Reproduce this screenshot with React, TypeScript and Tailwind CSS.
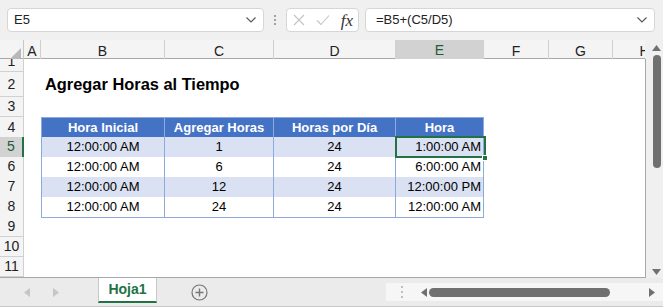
import React from "react";

const cols = ["A", "B", "C", "D", "E", "F", "G", "H"];
const rowHeights: Record<number, string> = { 1: "h-[13px]", 2: "h-[25px]" };

const data = [
  ["12:00:00 AM", "1", "24", "1:00:00 AM"],
  ["12:00:00 AM", "6", "24", "6:00:00 AM"],
  ["12:00:00 AM", "12", "24", "12:00:00 PM"],
  ["12:00:00 AM", "24", "24", "12:00:00 AM"],
];

const gridCols = "grid grid-cols-[24px_17px_124px_109px_122px_88px_65px_64px_64px]";

function Chevron() {
  return (
    <svg width="12" height="8" viewBox="0 0 12 8" fill="none">
      <path d="M1.5 1.5L6 6l4.5-4.5" stroke="#555" strokeWidth="1.1" />
    </svg>
  );
}

function FormulaBar() {
  return (
    <div className="h-[40px] flex items-center bg-[#f0f0f0] pl-[7px] pr-[8px]">
      <div className="w-[257px] h-[24px] bg-white border border-[#d6d6d6] rounded-[4px] flex items-center justify-between pl-[6px] pr-[6px] text-[13px] text-[#222]">
        <span>E5</span>
        <Chevron />
      </div>
      <div className="w-[22px] flex flex-col items-center gap-[2px]">
        <span className="w-[2px] h-[2px] bg-[#a0a0a0]" />
        <span className="w-[2px] h-[2px] bg-[#a0a0a0]" />
        <span className="w-[2px] h-[2px] bg-[#a0a0a0]" />
      </div>
      <div className="w-[73px] h-[24px] bg-white border border-[#d6d6d6] rounded-[4px] flex items-center justify-between pl-[6px] pr-[5px]">
        <svg width="12" height="12" viewBox="0 0 12 12">
          <path d="M1 1l10 10M11 1L1 11" stroke="#c4c4c4" strokeWidth="1.1" />
        </svg>
        <svg width="14" height="12" viewBox="0 0 14 12">
          <path d="M1 6.5l4 4L13 1.5" stroke="#c4c4c4" strokeWidth="1.1" fill="none" />
        </svg>
        <span className="text-[17px] italic text-[#333] font-['Liberation_Serif',serif] leading-none">fx</span>
      </div>
      <div className="ml-[6px] flex-1 h-[24px] bg-white border border-[#d6d6d6] rounded-[4px] flex items-center justify-between pl-[10px] pr-[6px] text-[13px] text-[#222]">
        <span>=B5+(C5/D5)</span>
        <Chevron />
      </div>
    </div>
  );
}

function ColumnHeader() {
  return (
    <div className="w-[645px] overflow-hidden">
      <div className={`${gridCols} h-[19px] bg-[#f4f4f4] border-b border-[#a8a8a8] text-[14px]`}>
        <div className="relative border-r border-[#c8c8c8]">
          <svg className="absolute right-[2px] bottom-[2px]" width="13" height="13" viewBox="0 0 13 13">
            <path d="M13 0V13H0Z" fill="#b8b8b8" />
          </svg>
        </div>
        {cols.map((c) => (
          <div
            key={c}
            className={`flex items-center justify-center border-r border-[#d0d0d0] ${
              c === "E" ? "bg-[#d2d2d2] text-[#1e5b36] border-b-2 border-b-[#217346]" : "text-[#222]"
            }`}
          >
            {c}
          </div>
        ))}
      </div>
    </div>
  );
}

function TableCell({ r, ci, text }: { r: number; ci: number; text: string }) {
  const head = r === 4;
  const band = r === 5 || r === 7;
  return (
    <div
      className={`flex items-center border-r border-b border-[#8ea9db] ${ci === 0 ? "border-l" : ""} ${
        head ? "border-t bg-[#4472c4] font-bold" : band ? "bg-[#d9e1f2]" : "bg-white"
      } ${!head && ci === 3 ? "justify-end pr-[2px]" : "justify-center"} text-black`}
    >
      <span className={head ? "text-white" : ""}>{text}</span>
    </div>
  );
}

function Row({ r }: { r: number }) {
  const h = rowHeights[r] ?? "h-[20px]";
  const headers = ["Hora Inicial", "Agregar Horas", "Horas por Día", "Hora"];
  const sel = r === 5;
  return (
    <div className={`${gridCols} ${h}`}>
      <div
        className={`flex items-center justify-center border-b border-r border-[#d0d0d0] overflow-hidden text-[14px] ${
          sel ? "bg-[#d2d2d2] text-[#1e5b36] border-r-2 border-r-[#217346]" : "bg-[#f4f4f4] text-[#222]"
        }`}
      >
        <span className={r === 1 ? "relative -top-[4px]" : ""}>{r}</span>
      </div>
      <div />
      {r === 2 ? (
        <div className="col-span-4 flex items-center pl-[4px] text-[16.4px] font-bold text-black whitespace-nowrap">
          Agregar Horas al Tiempo
        </div>
      ) : r >= 4 && r <= 8 ? (
        (r === 4 ? headers : data[r - 5]).map((t, i) => <TableCell key={i} r={r} ci={i} text={t} />)
      ) : (
        <div className="col-span-4" />
      )}
      <div />
      <div />
      <div />
    </div>
  );
}

function VScroll() {
  return (
    <div className="w-[13px] bg-[#f0f0f0] flex flex-col items-center pt-[4px] pb-[3px]">
      <svg width="9" height="6" viewBox="0 0 9 6" className="mt-[1px]">
        <path d="M4.5 0L9 6H0Z" fill="#707070" />
      </svg>
      <div className="mt-[4px] w-[8px] h-[113px] rounded-full bg-[#707070]" />
      <div className="flex-1" />
      <svg width="9" height="6" viewBox="0 0 9 6">
        <path d="M0 0H9L4.5 6Z" fill="#707070" />
      </svg>
    </div>
  );
}

function TabBar() {
  return (
    <div className="h-[29px] bg-[#ebebeb] flex border-b border-[#c8c8c8]">
      <div className="w-[98px] flex items-center pl-[24px] gap-[23px]">
        <svg width="6" height="9" viewBox="0 0 6 9">
          <path d="M6 0V9L0 4.5Z" fill="#c6c6c6" />
        </svg>
        <svg width="6" height="9" viewBox="0 0 6 9">
          <path d="M0 0V9L6 4.5Z" fill="#c6c6c6" />
        </svg>
      </div>
      <div className="w-[59px] h-[25px] bg-white border-x border-[#c8c8c8] border-b-2 border-b-[#217346] flex items-center justify-center text-[14px] font-bold text-[#217346]">
        Hoja1
      </div>
      <div className="w-[84px] flex items-center justify-center">
        <svg width="17" height="17" viewBox="0 0 17 17">
          <circle cx="8.5" cy="8.5" r="7.5" fill="none" stroke="#777" strokeWidth="1.2" />
          <path d="M8.5 4.5v8M4.5 8.5h8" stroke="#777" strokeWidth="1.4" />
        </svg>
      </div>
      <div className="w-[145px]" />
      <div className="flex-1 mt-[5px] mb-[5px] bg-[#f6f6f6] flex items-center">
        <div className="w-[32px] flex flex-col items-center gap-[3px]">
          <span className="w-[2px] h-[2px] bg-[#c0c0c0]" />
          <span className="w-[2px] h-[2px] bg-[#c0c0c0]" />
          <span className="w-[2px] h-[2px] bg-[#c0c0c0]" />
        </div>
        <svg width="6" height="9" viewBox="0 0 6 9" className="ml-[3px]">
          <path d="M6 0V9L0 4.5Z" fill="#707070" />
        </svg>
        <div className="ml-[2px] w-[181px] h-[9px] rounded-full bg-[#707070]" />
        <div className="flex-1" />
        <svg width="6" height="9" viewBox="0 0 6 9" className="mr-[8px]">
          <path d="M0 0V9L6 4.5Z" fill="#707070" />
        </svg>
      </div>
    </div>
  );
}

export default function App() {
  return (
    <div className="w-[663px] h-[307px] overflow-hidden bg-white text-[13px] font-['Liberation_Sans',Arial,sans-serif] select-none">
      <FormulaBar />
      <div className="flex h-[238px] bg-[#f0f0f0]">
        <div className="relative w-[650px] h-[238px] overflow-hidden">
          <ColumnHeader />
          <div className="w-[646px] bg-white border-r border-b border-[#a8a8a8] overflow-hidden">
            {[1, 2, 3, 4, 5, 6, 7, 8, 9, 10, 11].map((r) => (
              <Row key={r} r={r} />
            ))}
          </div>
          <div className="absolute left-[395px] top-[96px] w-[91px] h-[22px] border-2 border-[#217346]" />
          <div className="absolute left-[482px] top-[115px] w-[6px] h-[6px] bg-[#217346] border border-white" />
        </div>
        <VScroll />
      </div>
      <TabBar />
    </div>
  );
}
